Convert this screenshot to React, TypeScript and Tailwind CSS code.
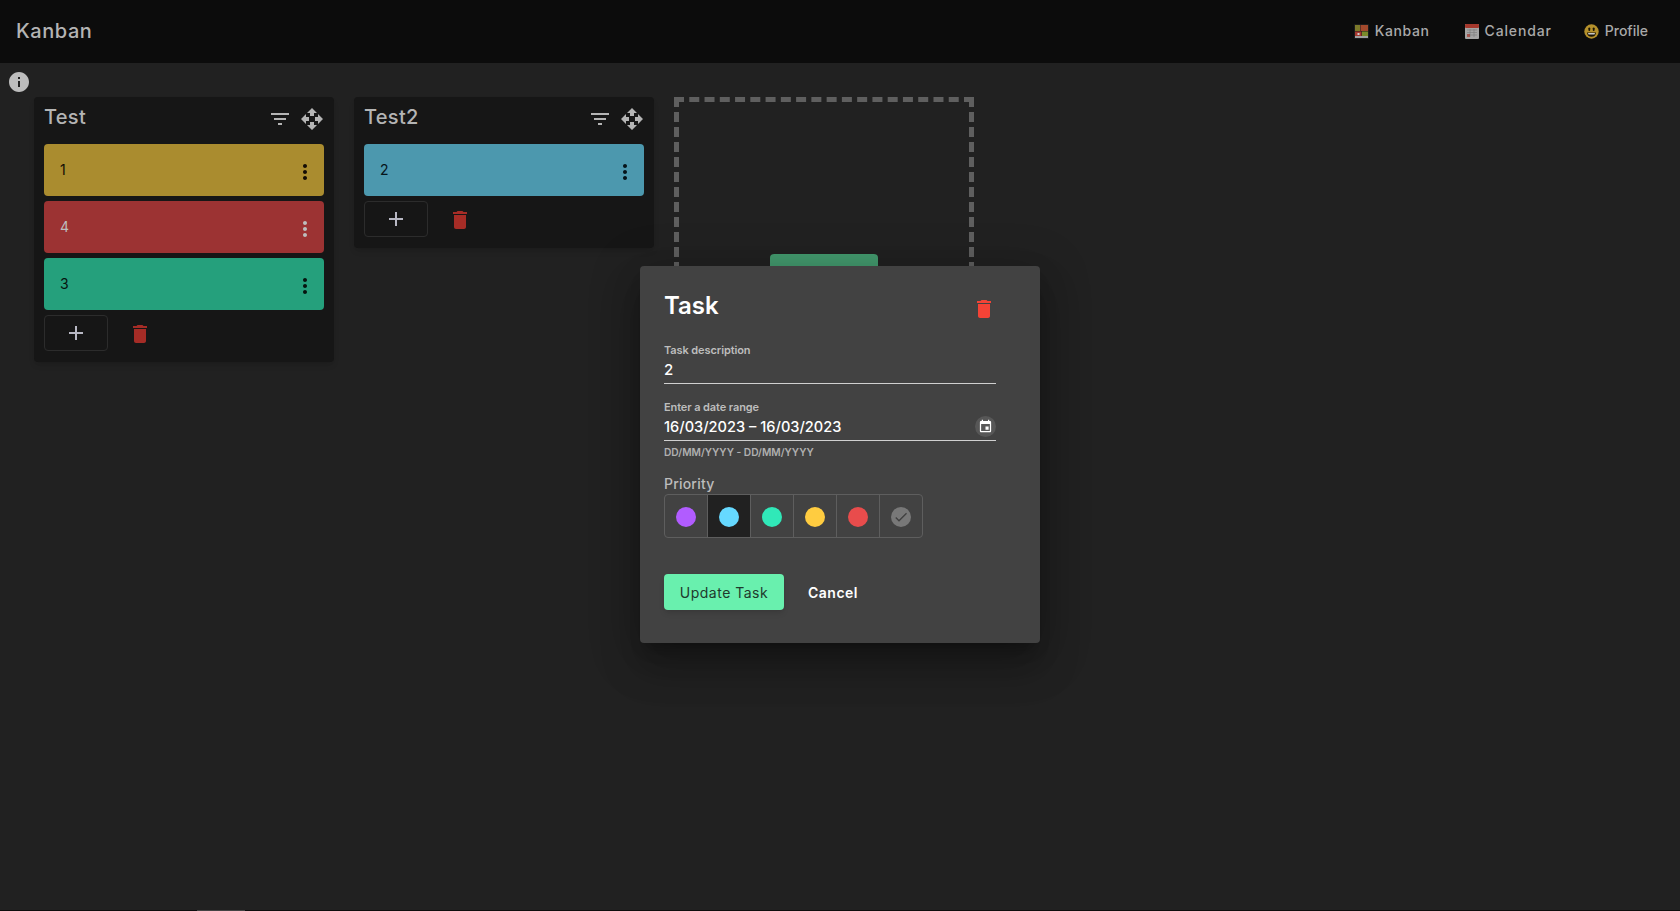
const F = "font-['Inter','Liberation_Sans',sans-serif]";

function Mat({ d, size = 24, className = "" }: { d: string; size?: number; className?: string }) {
  return (
    <svg width={size} height={size} viewBox="0 0 24 24" fill="currentColor" className={className}>
      <path d={d} />
    </svg>
  );
}

const FILTER = "M10 18h4v-2h-4v2zM3 6v2h18V6H3zm3 7h12v-2H6v2z";
const MOVE = "M10 9h4V6h3l-5-5-5 5h3v3zm-1 1H6V7l-5 5 5 5v-3h3v-4zm14 2l-5-5v3h-3v4h3v3l5-5zm-9 3h-4v3H7l5 5 5-5h-3v-3z";
const TRASH = "M6 19c0 1.1.9 2 2 2h8c1.1 0 2-.9 2-2V7H6v12zM19 4h-3.5l-1-1h-5l-1 1H5v2h14V4z";
const MORE = "M12 8c1.1 0 2-.9 2-2s-.9-2-2-2-2 .9-2 2 .9 2 2 2zm0 2c-1.1 0-2 .9-2 2s.9 2 2 2 2-.9 2-2-.9-2-2-2zm0 6c-1.1 0-2 .9-2 2s.9 2 2 2 2-.9 2-2-.9-2-2-2z";
const PLUS = "M19 13h-6v6h-2v-6H5v-2h6V5h2v6h6v2z";
const EVENT = "M17 12h-5v5h5v-5zM16 1v2H8V1H6v2H5c-1.11 0-1.99.9-1.99 2L3 19c0 1.1.89 2 2 2h14c1.1 0 2-.9 2-2V5c0-1.1-.9-2-2-2h-1V1h-2zm3 18H5V8h14v11z";
const CHECK = "M9 16.17 4.83 12l-1.42 1.41L9 19 21 7l-1.41-1.41z";
const INFO = "M12 2C6.48 2 2 6.48 2 12s4.48 10 10 10 10-4.48 10-10S17.52 2 12 2zm1 15h-2v-6h2v6zm0-8h-2V7h2v2z";

function KanbanEmoji() {
  return (
    <svg width="15" height="15" viewBox="0 0 15 15">
      <rect width="15" height="15" rx="1" fill="#1c1c1c" />
      <rect x="1" y="1" width="5" height="6" fill="#7d7a2a" />
      <rect x="6.500" y="1" width="7.500" height="6" fill="#a3492c" />
      <rect x="1" y="7.500" width="6.500" height="4.500" fill="#a8382e" />
      <rect x="8" y="7.500" width="6" height="4.500" fill="#7a8a2a" />
      <rect x="1" y="12" width="13" height="2" fill="#a0a0a0" />
      <rect x="3.500" y="9" width="2" height="2" fill="#d0d0d0" />
    </svg>
  );
}
function CalendarEmoji() {
  return (
    <svg width="14" height="15" viewBox="0 0 14 15">
      <rect width="14" height="15" rx="1" fill="#a5a5a5" />
      <rect width="14" height="4" rx="1" fill="#a5382c" />
      <path d="M2 6h10M2 8.500h10M2 11h10M5 5v8M9 5v8" stroke="#7f7f7f" strokeWidth="0.7" />
      <rect x="2" y="10" width="3" height="3" fill="#a5382c" opacity="0.7" />
    </svg>
  );
}
function SmileEmoji() {
  return (
    <svg width="15" height="15" viewBox="0 0 15 15">
      <circle cx="7.500" cy="7.500" r="7.200" fill="#b5912c" />
      <rect x="4.400" y="3.400" width="1.800" height="3.600" rx="0.900" fill="#1a1405" />
      <rect x="8.800" y="3.400" width="1.800" height="3.600" rx="0.900" fill="#1a1405" />
      <path d="M3 8.400h9c0 2.600-2 4.400-4.500 4.400S3 11 3 8.400z" fill="#1a1405" />
      <path d="M4 9h7c-.1.6-.2 1-.5 1.400h-6C4.200 10 4.100 9.600 4 9z" fill="#c9c9c9" />
    </svg>
  );
}

function NavItem({ icon, label, track }: { icon: React.ReactNode; label: string; track: string }) {
  return (
    <div className={`flex items-center gap-[6px] text-[14px] font-medium text-[#a9a9a9] ${track}`}>
      {icon}
      <span className="-mt-[2px]">{label}</span>
    </div>
  );
}

function Card({ label, bg, fg }: { label: string; bg: string; fg: string }) {
  return (
    <div className={`flex h-[52px] items-center justify-between rounded-[4px] pl-4 pr-[7px] ${bg} ${fg}`}>
      <span className="-mt-[2px] text-[14px]">{label}</span>
      <Mat d={MORE} className="mt-1" />
    </div>
  );
}

function Column({ title, children }: { title: string; children: React.ReactNode }) {
  return (
    <section className="w-[300px] rounded-[4px] bg-[#161616] px-[10px] pb-[11px] pt-[10px] shadow-md">
      <header className="flex h-[37px] items-start justify-between text-[#b4b4b4]">
        <h2 className="-mt-[2px] text-[20px] font-medium leading-[24px] tracking-[0.3px]">{title}</h2>
        <div className="flex">
          <Mat d={FILTER} />
          <Mat d={MOVE} className="ml-2" />
        </div>
      </header>
      <div className="flex flex-col gap-[5px]">
        {children}
        <div className="flex items-center gap-[20px]">
          <button className="flex h-[36px] w-[64px] items-center justify-center rounded-[4px] border border-[#2c2c2c] text-[#b8b8c4]">
            <Mat d={PLUS} />
          </button>
          <Mat d={TRASH} className="mt-[2px] text-[#a52c26]" />
        </div>
      </div>
    </section>
  );
}

function Swatch({ color, selected, last }: { color: string; selected?: boolean; last?: boolean }) {
  return (
    <div className={`flex h-full w-[43px] shrink-0 items-center justify-center border-r ${selected ? "bg-[#212121]" : ""} ${last ? "border-transparent" : "border-[#5e5e5e]"}`}>
      <div className={`mt-[1px] flex h-[20px] w-[20px] items-center justify-center rounded-full ${color}`}>
        {last && <Mat d={CHECK} size={16} className="text-[#404040]" />}
      </div>
    </div>
  );
}

function Dialog() {
  return (
    <div className="absolute left-[640px] top-[266px] h-[377px] w-[400px] rounded-[4px] bg-[#424242] px-6 pt-6 shadow-[0_11px_15px_-7px_rgba(0,0,0,0.3),0_24px_38px_3px_rgba(0,0,0,0.2),0_9px_46px_8px_rgba(0,0,0,0.18)]">
      <div className="flex h-[47px] w-[332px] items-start justify-between">
        <h1 className="mt-[1px] text-[24px] font-semibold leading-[30px] text-white">Task</h1>
        <Mat d={TRASH} className="mt-[7px] text-[#f44336]" />
      </div>
      <div className="w-[332px]">
        <label className="mt-[6px] block text-[11px] font-semibold leading-[14px] tracking-[-0.1px] text-[#bdbdbd]">Task description</label>
        <div className="h-[27px] border-b border-[#d0d0d0] pt-[4px] text-[15px] font-medium leading-[18px] text-white">2</div>
        <label className="mt-[16px] block text-[11px] font-semibold leading-[14px] tracking-[-0.1px] text-[#bdbdbd]">Enter a date range</label>
        <div className="flex h-[27px] items-start justify-between border-b border-[#d0d0d0] pt-[4px] text-[14.6px] font-medium leading-[18px] text-white">
          <span>16/03/2023 – 16/03/2023</span>
          <span className="-mt-[2px] flex h-[21px] w-[21px] items-center justify-center rounded-full bg-[#575757] text-white">
            <Mat d={EVENT} size={15} />
          </span>
        </div>
        <div className="mt-[5px] text-[10.2px] font-semibold leading-[13px] text-[#b0b0b0]">DD/MM/YYYY - DD/MM/YYYY</div>
      </div>
      <div className="mt-[16px] text-[14px] font-medium leading-[18px] tracking-[0.2px] text-[#bcbcbc]">Priority</div>
      <div className="mt-[1px] flex h-[44px] w-[259px] overflow-hidden rounded-[4px] border border-[#5e5e5e]">
        <Swatch color="bg-[#b15cff]" />
        <Swatch color="bg-[#66d9ff]" selected />
        <Swatch color="bg-[#30e8b8]" />
        <Swatch color="bg-[#ffcc40]" />
        <Swatch color="bg-[#e84c4c]" />
        <Swatch color="bg-[#787878]" last />
      </div>
      <div className="mt-[36px] flex items-center gap-[24px]">
        <button className="h-[36px] w-[120px] rounded-[4px] bg-[#69f0ae] text-[14px] tracking-[0.5px] text-[#203a2d] shadow-md">Update Task</button>
        <button className="text-[14px] font-semibold tracking-[0.5px] text-white">Cancel</button>
      </div>
    </div>
  );
}

export default function App() {
  return (
    <div className={`${F} relative flex h-[911px] w-full flex-col overflow-hidden bg-[#212121]`}>
      <nav className="flex h-[63px] items-center justify-between bg-[#0c0c0c] pl-4 pr-8">
        <span className="-mt-[2px] text-[20px] font-medium tracking-[0.55px] text-[#b4b4b4]">Kanban</span>
        <div className="flex items-center">
          <NavItem icon={<KanbanEmoji />} label="Kanban" track="tracking-[0.6px]" />
          <div className="ml-[35px]">
            <NavItem icon={<CalendarEmoji />} label="Calendar" track="tracking-[0.85px]" />
          </div>
          <div className="ml-[32px]">
            <NavItem icon={<SmileEmoji />} label="Profile" track="tracking-[0px]" />
          </div>
        </div>
      </nav>
      <main className="flex flex-1 flex-col">
        <div className="pl-[7px] pt-[7px] text-[#bdbdbd]">
          <Mat d={INFO} />
        </div>
        <div className="ml-[34px] mt-[3px] flex items-start gap-[20px]">
          <Column title="Test">
            <Card label="1" bg="bg-[#aa8c2f]" fg="text-[#140c05]" />
            <Card label="4" bg="bg-[#9c3333]" fg="text-[#bdbdbd]" />
            <Card label="3" bg="bg-[#25a07c]" fg="text-[#06140f]" />
          </Column>
          <Column title="Test2">
            <Card label="2" bg="bg-[#4c98ae]" fg="text-[#06141a]" />
          </Column>
          <div className="flex h-[220px] w-[300px] flex-col items-center border-[5px] border-dashed border-[#5f5f5f] pt-[152px]">
            <div className="h-[36px] w-[108px] rounded-[4px] bg-[#439a6e]" />
          </div>
        </div>
      </main>
      <div className="h-px shrink-0 bg-[#0d0d0d]">
        <div className="ml-[197px] h-px w-[48px] bg-[#444444]" />
      </div>
      <Dialog />
    </div>
  );
}
